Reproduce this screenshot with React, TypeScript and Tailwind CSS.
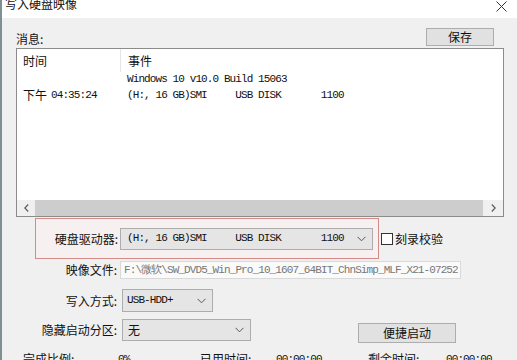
import React from "react";

const mono = "font-['Liberation_Mono',monospace] text-[11px] tracking-[-0.9px] whitespace-pre";

function Chevron() {
  return (
    <svg width="9" height="6" viewBox="0 0 9 6" className="shrink-0">
      <path d="M0.5 0.8 L4.5 4.8 L8.5 0.8" fill="none" stroke="#555" strokeWidth="1" />
    </svg>
  );
}

export default function App() {
  return (
    <div className="w-[517px] h-[360px] overflow-hidden bg-[#f0f0f0] flex flex-col border-l-2 border-[#7f9094] font-['Noto_Sans_CJK_SC','Noto_Sans',sans-serif] text-[12px] text-[#111]">
      {/* title bar */}
      <div className="h-[18px] shrink-0 bg-white flex items-start justify-between">
        <span className="ml-[3px] -mt-[4px] text-[12px] leading-[16px]">写入硬盘映像</span>
        <svg width="11" height="11" viewBox="0 0 11 11" className="mt-[1px] mr-[10px]">
          <path d="M0.5 0.5 L10.5 10.5 M10.5 0.5 L0.5 10.5" stroke="#333" strokeWidth="1" />
        </svg>
      </div>

      <div className="pl-[14px] flex flex-col">
        {/* messages header row */}
        <div className="mt-[10px] h-[18px] w-[488px] flex items-end justify-between">
          <span className="leading-[14px]">消息:</span>
          <button className="mr-[10px] w-[68px] h-[18px] bg-[#e1e1e1] border border-[#adadad] flex items-center justify-center leading-none text-[12px]">
            保存
          </button>
        </div>

        {/* list box */}
        <div className="mt-[2px] w-[488px] h-[169px] border border-[#8c8c8c] bg-white flex flex-col">
          <div className="flex flex-1">
            <div className="w-[104px] flex flex-col">
              <div className="h-[23px] flex items-center pl-[6px] border-r border-[#e5e5e5]">时间</div>
              <div className="h-[15px]" />
              <div className="h-[16px] flex items-center pl-[6px]">
                <span className="leading-none">下午</span>
                <span className={mono + " ml-[4px]"}>04:35:24</span>
              </div>
            </div>
            <div className="flex-1 flex flex-col">
              <div className="h-[23px] flex items-center pl-[7px]">事件</div>
              <div className={"h-[15px] flex items-center pl-[6px] " + mono}>Windows 10 v10.0 Build 15063</div>
              <div className={"h-[16px] flex items-center pl-[6px] " + mono}>{"(H:, 16 GB)SMI     USB DISK       1100"}</div>
            </div>
          </div>
          {/* horizontal scrollbar */}
          <div className="h-[16px] flex bg-[#f0f0f0]">
            <div className="w-[18px] flex items-center justify-center">
              <svg width="5" height="8" viewBox="0 0 5 8">
                <path d="M4.2 0.5 L0.8 4 L4.2 7.5" fill="none" stroke="#606060" strokeWidth="1.3" />
              </svg>
            </div>
            <div className="flex-1 bg-[#cdcdcd]" />
            <div className="w-[20px] flex items-center justify-center">
              <svg width="5" height="8" viewBox="0 0 5 8">
                <path d="M0.8 0.5 L4.2 4 L0.8 7.5" fill="none" stroke="#606060" strokeWidth="1.3" />
              </svg>
            </div>
          </div>
        </div>

        {/* drive row with red box */}
        <div className="mt-[1px] flex items-center">
          <div className="ml-[19px] w-[344px] h-[41px] border border-[#d48a86] bg-[#f6f0f0] flex items-center">
            <span className="w-[82px] text-right leading-none">硬盘驱动器:</span>
            <div className="ml-[2px] w-[253px] h-[22px] bg-[#e5e5e5] border border-[#adadad] flex items-center justify-between pl-[6px] pr-[6px]">
              <span className={mono}>{"(H:, 16 GB)SMI     USB DISK       1100"}</span>
              <Chevron />
            </div>
          </div>
          <div className="ml-[2px] w-[12px] h-[12px] border border-[#333] bg-white" />
          <span className="ml-[2px] leading-none">刻录校验</span>
        </div>

        {/* image file */}
        <div className="mt-[2px] h-[18px] flex items-center">
          <span className="w-[101px] text-right leading-none">映像文件:</span>
          <div className="ml-[3px] w-[341px] h-[18px] bg-[#fafafa] border border-[#d9d9d9] flex items-center pl-[3px] overflow-hidden">
            <span className={mono + " text-[#777]"}>F:\微软\SW_DVD5_Win_Pro_10_1607_64BIT_ChnSimp_MLF_X21-07252</span>
          </div>
        </div>

        {/* write mode */}
        <div className="mt-[10px] h-[23px] flex items-center">
          <span className="w-[101px] text-right leading-none">写入方式:</span>
          <div className="ml-[5px] w-[91px] h-[23px] bg-[#e5e5e5] border border-[#adadad] flex items-center justify-between pl-[4px] pr-[6px]">
            <span className={mono}>USB-HDD+</span>
            <Chevron />
          </div>
        </div>

        {/* hidden partition */}
        <div className="mt-[7px] h-[22px] flex items-start">
          <span className="w-[101px] h-[22px] flex items-center justify-end leading-none">隐藏启动分区:</span>
          <div className="ml-[5px] w-[129px] h-[22px] bg-[#e5e5e5] border border-[#adadad] flex items-center justify-between pl-[5px] pr-[6px]">
            <span className="leading-none">无</span>
            <Chevron />
          </div>
          <button className="ml-[107px] mt-[4px] w-[98px] h-[20px] bg-[#e1e1e1] border border-[#adadad] flex items-center justify-center leading-none text-[12px]">
            便捷启动
          </button>
        </div>

        {/* progress row (cut off) */}
        <div className="mt-[10px] h-[16px] flex items-center">
          <span className="ml-[7px] w-[95px] leading-none">完成比例:</span>
          <span className={mono + " w-[82px]"}>0%</span>
          <span className="w-[76px] leading-none">已用时间:</span>
          <span className={mono + " w-[92px]"}>00:00:00</span>
          <span className="w-[78px] leading-none">剩余时间:</span>
          <span className={mono}>00:00:00</span>
        </div>
      </div>
    </div>
  );
}
